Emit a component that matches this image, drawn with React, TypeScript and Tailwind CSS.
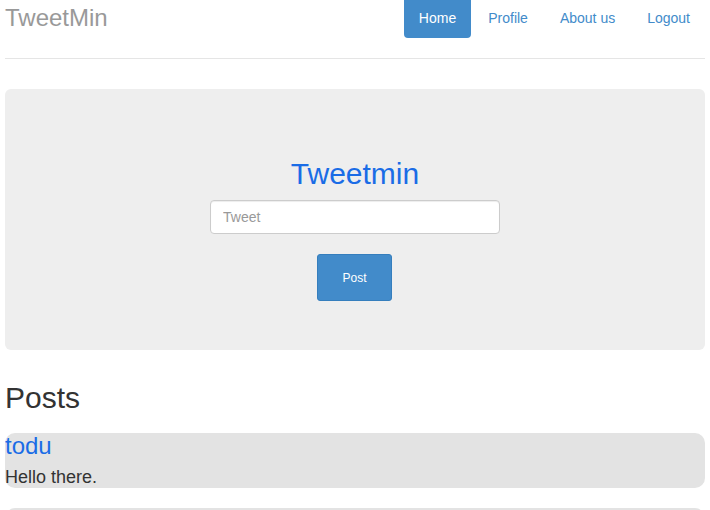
const posts = [
  { user: "todu", text: "Hello there." },
  { user: "todu", text: "Hi." },
];

const links = ["Home", "Profile", "About us", "Logout"];

export default function App() {
  return (
    <div className="min-h-screen bg-white px-[5px] font-['Liberation_Sans',Arial,sans-serif] text-[#333]">
      <div className="flex h-[59px] items-start justify-between border-b border-[#e5e5e5]">
        <span className="text-[24px] leading-[36px] text-[#999]">TweetMin</span>
        <ul className="flex">
          {links.map((l, i) => (
            <li key={l} className="ml-[2px]">
              <a
                className={
                  i === 0
                    ? "block h-[38px] rounded-b-[4px] bg-[#428bca] px-[15px] text-[14px] leading-[36px] text-white"
                    : "block h-[38px] px-[15px] text-[14px] leading-[36px] text-[#428bca]"
                }
              >
                {l}
              </a>
            </li>
          ))}
        </ul>
      </div>

      <div className="mt-[30px] flex h-[261px] flex-col items-center rounded-[6px] bg-[#eee] pt-[68px]">
        <h1 className="text-[30px] leading-[33px] text-[#1a6ce6]">Tweetmin</h1>
        <input
          placeholder="Tweet"
          className="mt-[10px] h-[34px] w-[290px] rounded-[4px] border border-[#ccc] bg-white px-[12px] text-[14px] text-[#555] shadow-[inset_0_1px_1px_rgba(0,0,0,0.075)] outline-none placeholder:text-[#999]"
        />
        <button className="mr-[1px] mt-[20px] h-[47px] w-[75px] rounded-[3px] border border-[#357ebd] bg-[#428bca] text-[12px] text-white">
          Post
        </button>
      </div>

      <h2 className="mt-[31px] text-[30px] leading-[33px]">Posts</h2>

      <div className="mt-[19px] flex flex-col gap-[20px]">
        {posts.map((p, i) => (
          <div key={i} className="flex h-[55px] flex-col rounded-[10px] bg-[#e3e3e3]">
            <span className="text-[24px] leading-[26px] text-[#1a6ce6]">{p.user}</span>
            <span className="mt-[8px] text-[18px] leading-[20px] text-[#333]">{p.text}</span>
          </div>
        ))}
      </div>
    </div>
  );
}
